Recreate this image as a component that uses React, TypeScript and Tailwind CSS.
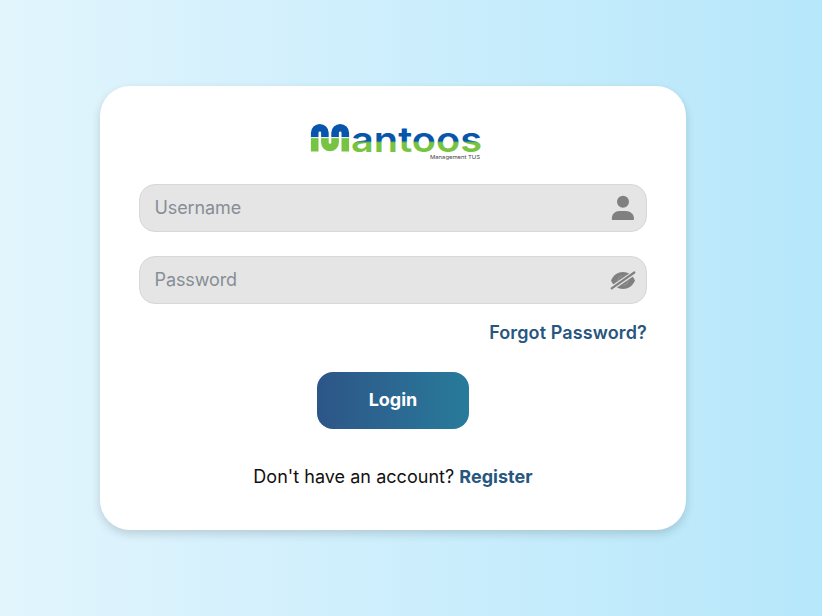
import React from "react";

function Logo() {
  return (
    <svg width="172" height="38" viewBox="310 123 172 38" role="img" aria-label="Mantoos Management TUS" className="block overflow-visible">
      <defs>
        <linearGradient id="mark" gradientUnits="userSpaceOnUse" x1="0" y1="123" x2="0" y2="153">
          <stop offset="0.46" stopColor="#0756ab" />
          <stop offset="0.48" stopColor="#e4f3f2" />
          <stop offset="0.50" stopColor="#e4f3f2" />
          <stop offset="0.52" stopColor="#76c442" />
        </linearGradient>
        <linearGradient id="word" gradientUnits="userSpaceOnUse" x1="0" y1="123" x2="0" y2="153">
          <stop offset="0.59" stopColor="#0756ab" />
          <stop offset="0.66" stopColor="#76c442" />
        </linearGradient>
      </defs>
      <path d="M314.700 151.500V132.800a5 5 0 0 1 10.200 0V142.500a5.100 5 0 0 0 10.200 0V132.800a5 5 0 0 1 10.200 0V151.500" fill="none" stroke="url(#mark)" strokeWidth="7.600" />
      <text x="351" y="151.700" fontFamily="Inter, sans-serif" fontSize="35" fontWeight="600" fill="url(#word)" textLength="131" lengthAdjust="spacingAndGlyphs">antoos</text>
      <text x="430" y="159" fontFamily="Inter, sans-serif" fontSize="5" fill="#444" textLength="50" lengthAdjust="spacingAndGlyphs">Management TUS</text>
    </svg>
  );
}

function UserIcon() {
  return (
    <svg width="24" height="26" viewBox="0 0 24 26" fill="#808080">
      <circle cx="12" cy="6.800" r="6" />
      <path d="M1.500 25Q0.800 25 0.800 24C0.800 19 4 16 8.500 16H14.500C19.500 16 23 19 23 24Q23 25 22.300 25Z" />
    </svg>
  );
}

function EyeOffIcon() {
  return (
    <svg width="26" height="20" viewBox="0 0 26 20">
      <path d="M1 10.500C3.500 4.700 8 2 13 2S22.500 4.700 25 10.500C22.500 16.300 18 19 13 19S3.500 16.300 1 10.500Z" fill="#808080" />
      <path d="M8 11.500Q7.700 6.300 12.500 6M18 9.500Q18.300 14.500 13.500 15" fill="none" stroke="#a0a0a0" strokeWidth="0.700" />
      <path d="M1.500 18.500L24.500 2.700" stroke="#e5e5e5" strokeWidth="4.600" />
      <path d="M1.700 18.300L24.300 2.500" stroke="#808080" strokeWidth="2.200" strokeLinecap="round" />
    </svg>
  );
}

function Field({ label, type, icon }: { label: string; type: string; icon: React.ReactNode }) {
  return (
    <label className="flex h-12 items-center rounded-2xl border border-[#d5d8dc] bg-[#e5e5e5] pr-[10px] pl-[14.500px]">
      <input type={type} placeholder={label} className="min-w-0 flex-1 bg-transparent pb-[2px] text-[18px] tracking-[-0.1px] text-black outline-none placeholder:text-[#868e96]" />
      <span className="flex w-[26px] justify-center">{icon}</span>
    </label>
  );
}

export default function App() {
  return (
    <main className="h-[616px] w-[822px] overflow-hidden bg-linear-to-r from-[#e2f5fd] via-[#cceefc] to-[#b6e7fa] pt-[86px] pl-[100px] font-['Inter',sans-serif]">
      <section className="flex h-[444px] w-[586px] flex-col rounded-[30px] bg-white px-[39px] pt-[37px] shadow-[0_4px_10px_rgba(0,0,0,0.15)]">
        <div className="mb-[23px] flex justify-center pl-[6px]"><Logo /></div>
        <form className="flex flex-col" onSubmit={(event) => event.preventDefault()}>
          <div className="flex flex-col gap-6">
            <Field label="Username" type="text" icon={<UserIcon />} />
            <Field label="Password" type="password" icon={<EyeOffIcon />} />
          </div>
          <a href="#" className="mt-[15px] self-end text-[18px] leading-7 font-semibold tracking-[0.12px] text-[#27567f]">Forgot Password?</a>
          <button className="mt-[25px] h-[57px] w-[152px] self-center rounded-2xl bg-linear-to-r from-[#2d5587] to-[#277b9b] pb-[3px] text-[18px] font-bold text-white">Login</button>
        </form>
        <p className="mt-[34px] text-center text-[18px] leading-7 tracking-[0.03px] text-[#111]">Don't have an account? <a href="#" className="font-bold text-[#27567f]">Register</a></p>
      </section>
    </main>
  );
}
